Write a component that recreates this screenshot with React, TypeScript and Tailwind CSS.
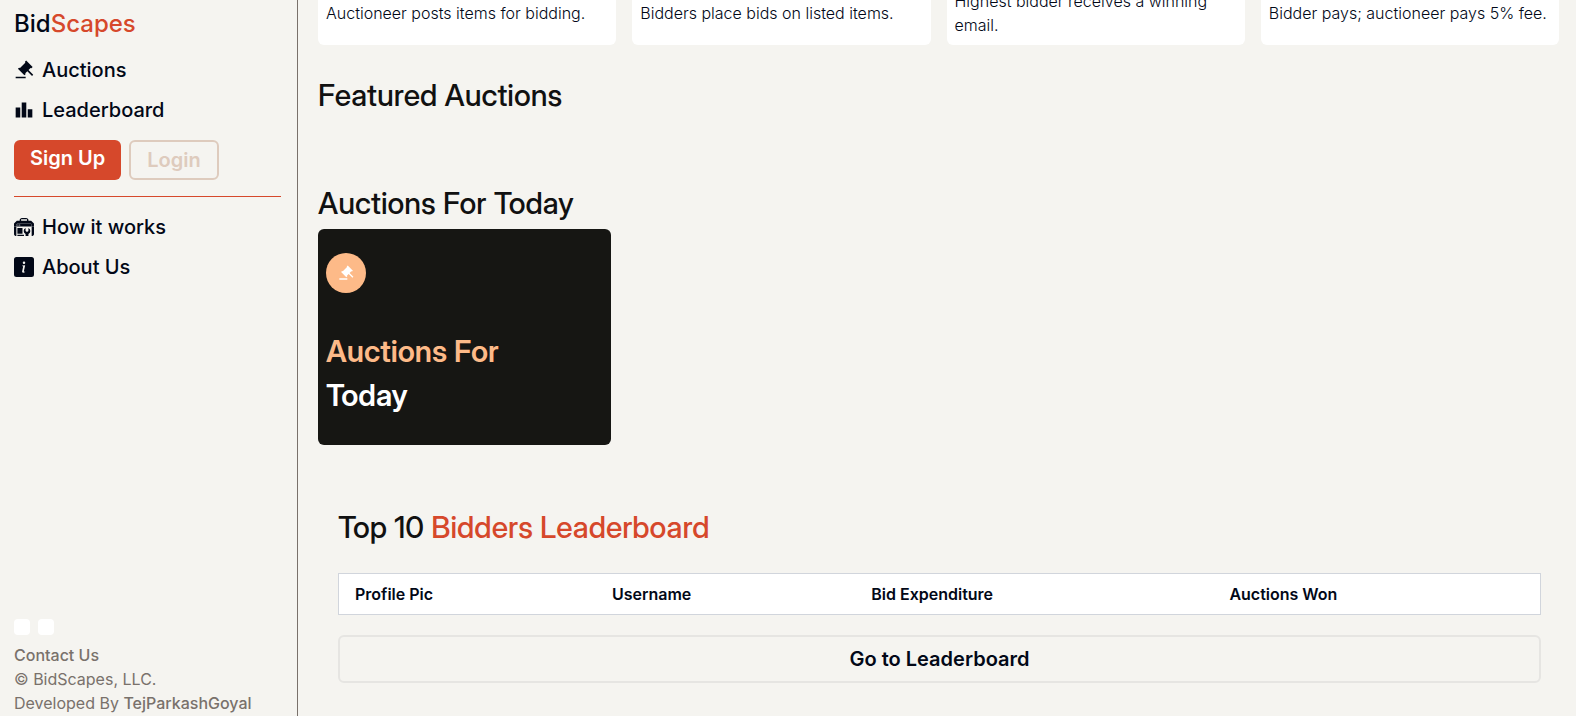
import { RiAuctionFill } from "react-icons/ri";
import { MdLeaderboard } from "react-icons/md";
import { SiGooglesearchconsole } from "react-icons/si";
import { BsFillInfoSquareFill } from "react-icons/bs";
import type { IconType } from "react-icons";

const steps = [
  "Auctioneer posts items for bidding.",
  "Bidders place bids on listed items.",
  "Highest bidder receives a winning email.",
  "Bidder pays; auctioneer pays 5% fee.",
];

const columns = ["Profile Pic", "Username", "Bid Expenditure", "Auctions Won"];

const heading = "font-['Inter_Display','Inter',sans-serif] text-3xl font-medium text-[#111111]";

function NavLink({ icon: Icon, label }: { icon: IconType; label: string }) {
  return (
    <li>
      <a href="#" className="flex items-center gap-2 text-xl font-medium">
        <Icon />
        {label}
      </a>
    </li>
  );
}

function Sidebar() {
  return (
    <aside className="flex w-[298px] shrink-0 flex-col justify-between border-r border-r-stone-500 pt-2 pr-4 pb-px pl-3.5">
      <div>
        <a href="#" className="block text-2xl font-medium">
          Bid<span className="text-[#d6482b]">Scapes</span>
        </a>
        <nav>
          <ul className="mt-4 flex flex-col gap-3">
            <NavLink icon={RiAuctionFill} label="Auctions" />
            <NavLink icon={MdLeaderboard} label="Leaderboard" />
          </ul>
          <div className="my-4 flex gap-2 text-xl font-semibold">
            <a href="#" className="rounded-md bg-[#d6482b] px-4 py-1 text-white">
              Sign Up
            </a>
            <a href="#" className="rounded-md border-2 border-[#decbbd] px-4 py-1 text-[#decbbd]">
              Login
            </a>
          </div>
          <hr className="mb-4 border-[#d6482b]" />
          <ul className="flex flex-col gap-3">
            <NavLink icon={SiGooglesearchconsole} label="How it works" />
            <NavLink icon={BsFillInfoSquareFill} label="About Us" />
          </ul>
        </nav>
      </div>
      <footer className="text-stone-500">
        <div className="mb-2 flex gap-2">
          <a href="#" aria-label="Instagram" className="size-4 rounded bg-white" />
          <a href="#" aria-label="LinkedIn" className="size-4 rounded bg-white" />
        </div>
        <a href="#" className="block font-medium">
          Contact Us
        </a>
        <p>© BidScapes, LLC.</p>
        <p>
          Developed By{" "}
          <a href="#" className="font-medium">
            TejParkashGoyal
          </a>
        </p>
      </footer>
    </aside>
  );
}

export default function App() {
  return (
    <div className="flex min-h-screen overflow-hidden bg-[#f5f4f0] font-['Inter',sans-serif] text-[#020817]">
      <Sidebar />
      <main className="min-w-0 flex-1 pr-[17px] pl-5">
        <section className="-mt-[19px] grid grid-cols-4 gap-4">
          {steps.map((step) => (
            <div key={step} className="flex items-center rounded-md bg-white p-2 font-light">
              <p>{step}</p>
            </div>
          ))}
        </section>

        <section className="mt-8">
          <h3 className={heading}>Featured Auctions</h3>
        </section>

        <section className="mt-[72px]">
          <h3 className={heading}>Auctions For Today</h3>
          <div className="mt-2 w-[293px] rounded-md bg-[#161613] px-2 pt-6 pb-8">
            <span className="mb-10 flex size-10 items-center justify-center rounded-full bg-[#fdba88] text-white">
              <RiAuctionFill />
            </span>
            <div className="flex flex-col gap-2 font-['Inter_Display','Inter',sans-serif] text-3xl font-semibold">
              <h3 className="text-[#fdba88]">Auctions For</h3>
              <h3 className="text-white">Today</h3>
            </div>
          </div>
        </section>

        <section className="mt-16 pr-[18px] pb-8 pl-5">
          <h2 className={heading}>
            Top 10 <span className="text-[#d6482b]">Bidders Leaderboard</span>
          </h2>
          <table className="mt-7 mb-5 w-full border border-gray-300 bg-white">
            <thead>
              <tr>
                {columns.map((name) => (
                  <th key={name} scope="col" className="px-4 py-2 text-left font-semibold">
                    {name}
                  </th>
                ))}
              </tr>
            </thead>
          </table>
          <a
            href="#"
            className="block rounded-md border-2 border-[#e6e5e2] py-2 text-center text-xl font-semibold"
          >
            Go to Leaderboard
          </a>
        </section>
      </main>
    </div>
  );
}
